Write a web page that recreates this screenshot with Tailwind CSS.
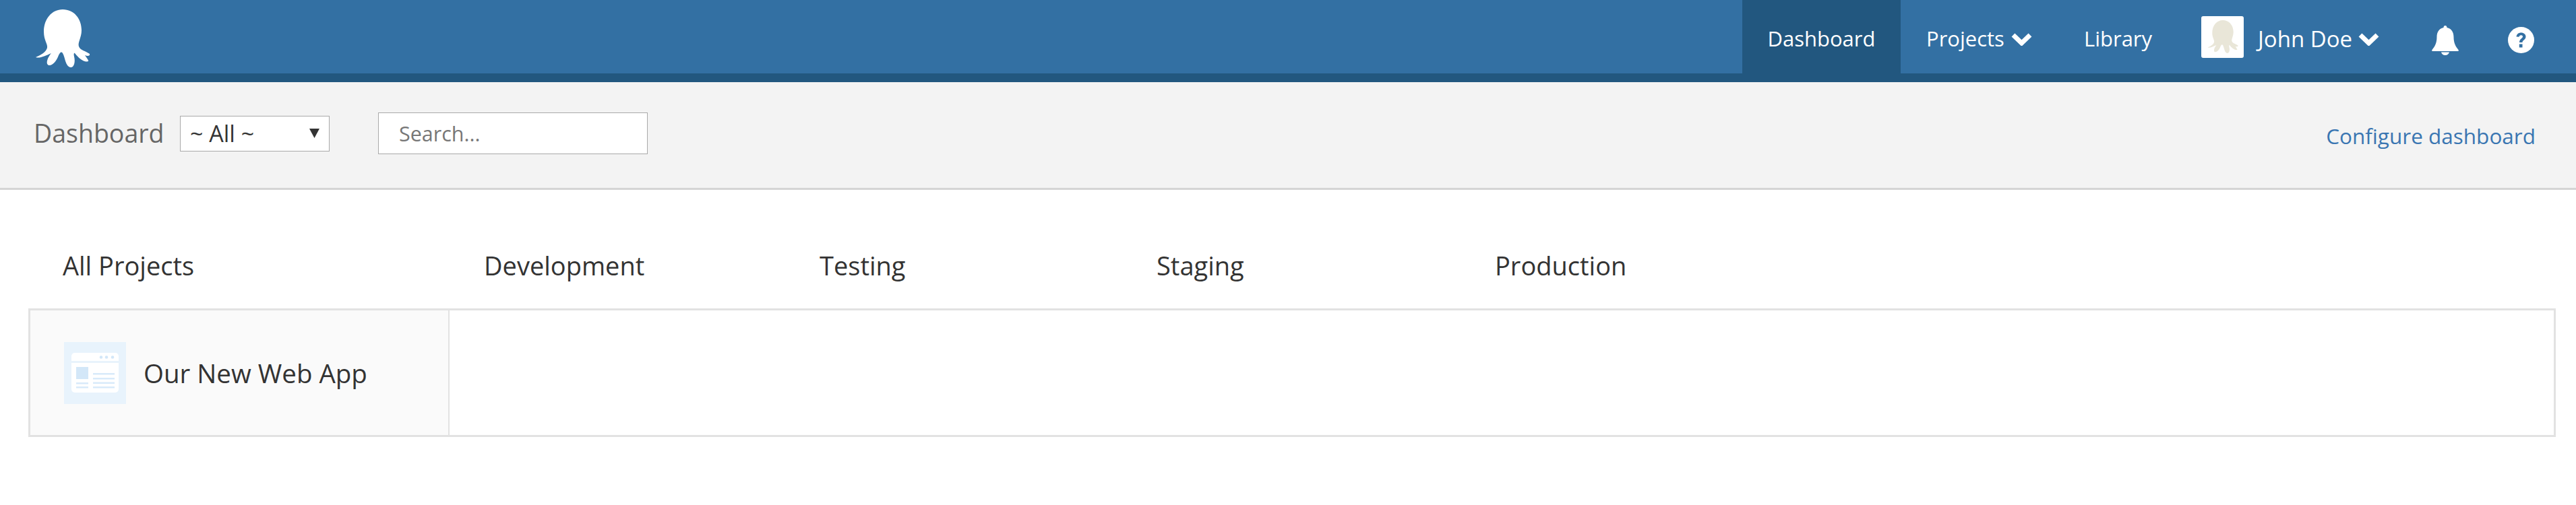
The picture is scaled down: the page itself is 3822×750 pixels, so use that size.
<!DOCTYPE html>
<html lang="en">
  <head>
    <meta charset="UTF-8" />
    <title>Dashboard</title>
    <script src="https://cdn.jsdelivr.net/npm/@tailwindcss/browser@4"></script>
  </head>
  <body class="bg-white font-['Open_Sans',sans-serif] text-[#333]">
    <!-- top nav -->
    <header class="flex h-[122px] items-start justify-between border-b-[13px] border-[#22577f] bg-[#3370a3] text-[31px] text-white">
      <svg class="ml-[52px] mt-[14px] h-[86px] w-[82px]" viewBox="0 0 82 86" fill="#fff">
        <path d="M1 71C8 68 16 64 18 57 19 51 13 46 13 33 13 14 25 0 41 0 58 0 69 14 69 31 69 42 63 49 65 55 67 61 76 62 81 66 82 69 78 70 74 68 76 71 80 76 79 77 73 79 65 73 59 65 58 64 57 66 58 70 60 78 58 86 53 86 45 85 45 72 41 65 39 62 37 64 35 68 32 76 27 83 21 83 15 82 18 72 24 65 15 69 7 73 1 71Z" />
      </svg>
      <nav class="flex h-full items-center">
        <a class="flex h-full w-[235px] items-center justify-center bg-[#22577f] pt-[6px]">Dashboard</a>
        <a class="ml-[38px] flex w-[157px] items-center justify-between pt-[6px] whitespace-nowrap">
          Projects
          <svg class="h-[21px] w-[31px]" viewBox="0 0 31 21" fill="none" stroke="#fff" stroke-width="7"><path d="M3 5l12.500 12L28 5" /></svg>
        </a>
        <a class="ml-[77px] w-[99px] pt-[6px]">Library</a>
        <div class="ml-[75px] flex h-[62px] w-[63px] items-center justify-center rounded-[3px] bg-white">
          <svg class="h-[49px] w-[46px]" viewBox="0 0 82 86" preserveAspectRatio="none" fill="#e9e6d8">
            <path d="M1 71C8 68 16 64 18 57 19 51 13 46 13 33 13 14 25 0 41 0 58 0 69 14 69 31 69 42 63 49 65 55 67 61 76 62 81 66 82 69 78 70 74 68 76 71 80 76 79 77 73 79 65 73 59 65 58 64 57 66 58 70 60 78 58 86 53 86 45 85 45 72 41 65 39 62 37 64 35 68 32 76 27 83 21 83 15 82 18 72 24 65 15 69 7 73 1 71Z" />
          </svg>
        </div>
        <a class="ml-[21px] flex w-[180px] items-center justify-between pt-[6px] whitespace-nowrap text-[33px]">
          John Doe
          <svg class="h-[21px] w-[31px]" viewBox="0 0 31 21" fill="none" stroke="#fff" stroke-width="7"><path d="M3 5l12.500 12L28 5" /></svg>
        </a>
        <svg class="ml-[78px] mt-[10px] h-[44px] w-[40px]" viewBox="0 0 40 44" fill="#fff">
          <path d="M20 0c1.500 0 2.500 1 2.500 3 7 1.500 10 7 10 14 0 9 3 14 7 19 .8 1.200 0 2-1 2H1.500c-1 0-1.800-.8-1-2 4-5 7-10 7-19 0-7 3-12.500 10-14C17.500 1 18.500 0 20 0ZM14 39.500h12C25.500 42 23 44 20 44s-5.500-2-6-4.500Z" />
        </svg>
        <svg class="ml-[73px] mr-[62px] mt-[10px] h-[39px] w-[39px]" viewBox="0 0 39 39">
          <circle cx="19.500" cy="19.500" r="19.500" fill="#fff" />
          <path d="M12.500 14.500c.5-4 3.500-6 7-6 4 0 7 2.500 7 6 0 4.500-5 5-5 8.500h-4.500c0-5.500 5-6 5-8.500 0-1.500-1.200-2.200-2.500-2.200-1.600 0-2.700 1-3 2.500Z" fill="#3370a3" />
          <rect x="16.800" y="25.500" width="4.700" height="5" fill="#3370a3" />
        </svg>
      </nav>
    </header>

    <!-- dashboard toolbar -->
    <div class="flex h-[160px] items-center border-b-[3px] border-[#d4d4d4] bg-[#f3f3f3] pb-[5px] pl-[50px] pr-[60px]">
      <h1 class="w-[217px] text-[37.500px] whitespace-nowrap text-[#666]">Dashboard</h1>
      <div class="flex h-[53px] w-[222px] items-center justify-between border border-[#a9a9a9] bg-white pl-[14px] pr-[14px] text-[34px]">
        <span>~ All ~</span>
        <svg class="h-[14px] w-[15px]" viewBox="0 0 15 14" fill="#333"><path d="M0 0h15L7.500 14Z" /></svg>
      </div>
      <input class="ml-[72px] h-[62px] w-[400px] border border-[#a9a9a9] bg-white px-[30px] text-[30.500px] placeholder:text-[#777]" placeholder="Search..." />
      <a class="ml-auto pt-[8px] text-[31.500px] text-[#3a76b2]">Configure dashboard</a>
    </div>

    <!-- environments table -->
    <main class="ml-[42px] mr-[30px] mt-[84px] text-[38px]">
      <div class="flex h-[92px] items-start">
        <div class="w-[676px] pl-[51px]">All Projects</div>
        <div class="w-[498px]">Development</div>
        <div class="w-[500px]">Testing</div>
        <div class="w-[502px]">Staging</div>
        <div>Production</div>
      </div>
      <div class="flex h-[191px] border-[3px] border-[#e2e2e2]">
        <div class="flex w-[622px] items-center border-r-2 border-[#e2e2e2] bg-[#fafafa] pl-[50px]">
          <svg class="h-[92px] w-[92px] shrink-0" viewBox="0 0 92 92">
            <rect width="92" height="92" fill="#e8f3fc" />
            <rect x="11" y="16" width="70" height="59" rx="5" fill="#fff" />
            <rect x="11" y="28" width="70" height="3" fill="#e8f3fc" />
            <circle cx="55" cy="22.500" r="2.300" fill="#d3e7f8" />
            <circle cx="63" cy="22.500" r="2.300" fill="#d3e7f8" />
            <circle cx="72" cy="22.500" r="2.300" fill="#d3e7f8" />
            <rect x="18" y="37" width="18" height="18" fill="#d3e7f8" />
            <rect x="18" y="60" width="18" height="2.500" fill="#d8eafa" />
            <rect x="18" y="66" width="18" height="2.500" fill="#d8eafa" />
            <rect x="43" y="46" width="32" height="2.500" fill="#d8eafa" />
            <rect x="43" y="53" width="32" height="2.500" fill="#d8eafa" />
            <rect x="43" y="59.500" width="32" height="2.500" fill="#d8eafa" />
            <rect x="43" y="66" width="32" height="2.500" fill="#d8eafa" />
          </svg>
          <span class="ml-[26px] whitespace-nowrap pt-[2px] text-[38.500px]">Our New Web App</span>
        </div>
        <div class="flex-1"></div>
      </div>
    </main>
  </body>
</html>
